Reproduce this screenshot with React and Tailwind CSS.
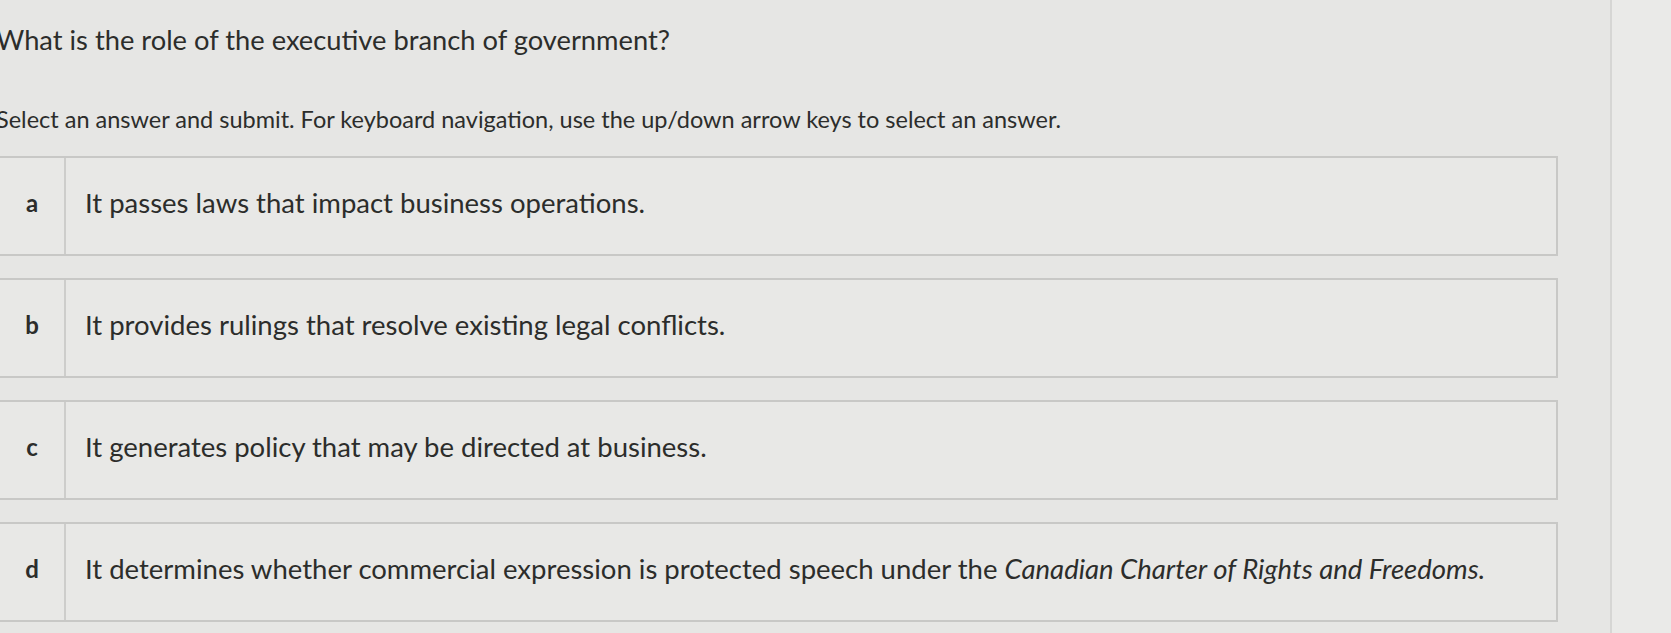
import React from 'react';

const options = [
  { letter: 'a', text: 'It passes laws that impact business operations.' },
  { letter: 'b', text: 'It provides rulings that resolve existing legal conflicts.' },
  { letter: 'c', text: 'It generates policy that may be directed at business.' },
  {
    letter: 'd',
    text: (
      <>
        It determines whether commercial expression is protected speech under the{' '}
        <em>Canadian Charter of Rights and Freedoms.</em>
      </>
    ),
  },
];

export default function App() {
  return (
    <div
      className="w-[1671px] h-[633px] overflow-hidden flex bg-[#e6e6e4] text-[#2c2d2b]"
      style={{ fontFamily: 'Lato, "Open Sans", sans-serif' }}
    >
      <div className="w-[1612px] flex flex-col border-r-2 border-[#d6d6d4]">
        {/* Question */}
        <h1 className="ml-[-4px] mt-[22px] text-[27.3px] leading-[36px] font-normal">
          What is the role of the executive branch of government?
        </h1>
        <p className="ml-[-4px] mt-[46px] text-[23.5px] leading-[30px]">
          Select an answer and submit. For keyboard navigation, use the up/down arrow keys to select an answer.
        </p>

        {/* Answers */}
        <div className="mt-[22px] flex flex-col gap-[22px] w-[1560px] ml-[-2px]">
          {options.map((o) => (
            <div
              key={o.letter}
              className="h-[100px] flex items-center border-2 border-[#c8c8c6] bg-[#e8e8e6]"
            >
              <div className="w-[66px] h-full flex items-center justify-center border-r-2 border-[#cdcdcb] text-[24px] font-bold pb-[6px]">
                {o.letter}
              </div>
              <div className="pl-[19px] text-[27.5px] pb-[6px]">{o.text}</div>
            </div>
          ))}
        </div>
      </div>
      <div className="flex-1 bg-[#eaeae8]" />
    </div>
  );
}
